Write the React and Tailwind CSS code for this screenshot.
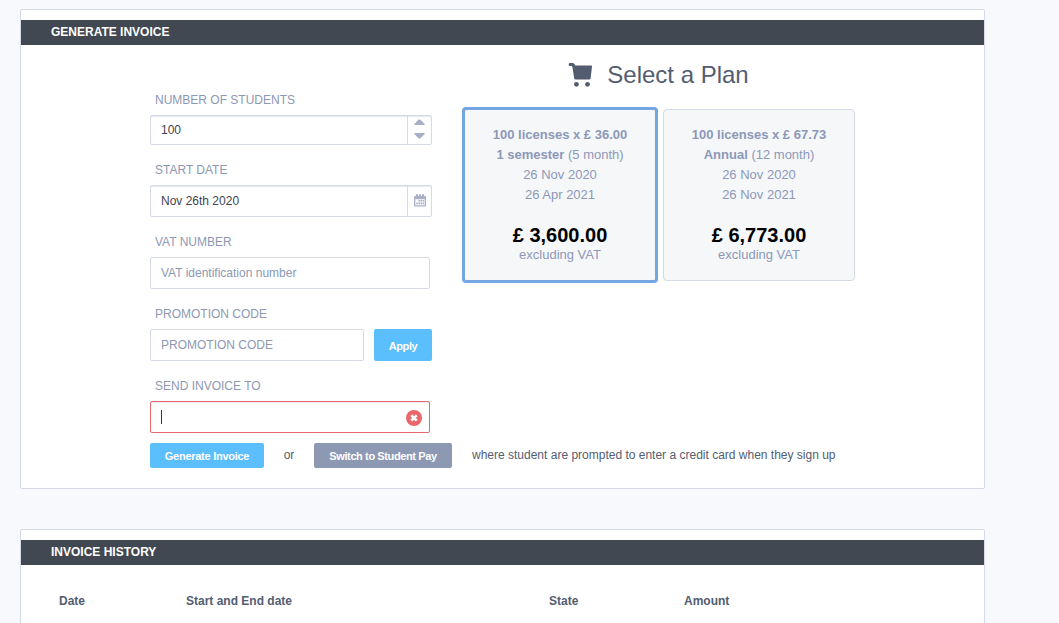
import React from "react";

function Panel({ title, className, children }) {
  return (
    <section className={`w-[965px] rounded-[2px] border border-[#d5d9e8] bg-white pt-[10px] ${className}`}>
      <h2 className="h-[25px] bg-[#424851] pl-[30px] text-[12px] leading-[24px] font-bold text-white">{title}</h2>
      {children}
    </section>
  );
}

function Field({ label, className = "", children }) {
  return (
    <div className={className}>
      <label className="block h-[30px] pl-[5px] text-[12px] leading-[30px] text-[#8d98b3]">{label}</label>
      {children}
    </div>
  );
}

const box = "rounded-[2px] border bg-white text-[12px]";

function Plan({ selected, price, name, months, from, to, total }) {
  return (
    <article
      className={
        selected
          ? "h-[176px] w-[196px] rounded-[4px] border-[3px] border-[#74a6e2] bg-[#f5f7f9] pt-[15px] text-center"
          : "mt-[2px] h-[172px] w-[192px] rounded-[4px] border border-[#d5d9e8] bg-[#f5f7f9] pt-[15px] text-center"
      }
    >
      <p className="font-bold">{price}</p>
      <p><b>{name}</b> ({months} month)</p>
      <p>{from}</p>
      <p>{to}</p>
      <p className="mt-5 text-[20px] font-bold text-black">{total}</p>
      <p>excluding VAT</p>
    </article>
  );
}

export default function App() {
  return (
    <main className="h-[623px] overflow-hidden bg-[#f8f9fd] pt-[9px] pl-5 font-['Liberation_Sans',Arial,sans-serif] text-[#535d70]">
      <Panel title="GENERATE INVOICE" className="h-[480px]">
        <div className="flex h-[398px] pl-[129px]">
          <div className="w-[282px] pt-[40px]">
            <Field label="NUMBER OF STUDENTS" className="h-[70px]">
              <div className={`${box} flex h-[30px] border-[#d5d9e8] shadow-[inset_0_1px_1px_#e8e9ef]`}>
                <span className="w-[257px] border-r border-[#d5d9e8] pl-[10px] leading-[28px] text-[#3f444e]">100</span>
                <svg className="mt-[3px] ml-[6px] h-[21px] w-[11px]" viewBox="0 0 10 21" preserveAspectRatio="none" fill="#a7b0c6">
                  <path d="M.3 6V5L4 .8Q5 0 6 .8L9.7 5V6ZM.3 14h9.4v1L6 19.2Q5 20 4 19.2L.3 15Z" />
                </svg>
              </div>
            </Field>
            <Field label="START DATE" className="h-[72px]">
              <div className={`${box} flex h-[32px] border-[#d5d9e8] shadow-[inset_0_1px_1px_#e8e9ef]`}>
                <span className="w-[257px] border-r border-[#d5d9e8] pl-[10px] leading-[30px] text-[#3f444e]">Nov 26th 2020</span>
                <svg className="mt-[8px] ml-[6px] h-[13px] w-[12px]" viewBox="0 0 12 13" fill="#a7b0c6">
                  <path fillRule="evenodd" d="M0 3Q0 2 1 2H2V.3h2V2h1V.3h2V2h1V.3h2V2h1q1 0 1 1v8.5q0 1-1 1H1q-1 0-1-1ZM1.3 5.2v6h9.4v-6Z" />
                  <path d="M4.5 6H6v1.6H4.5zM6.5 6H8v1.6H6.5zM8.5 6H10v1.6H8.5zM2.3 8.6h1.6v1.6H2.3zM4.5 8.6H6v1.6H4.5zM6.5 8.6H8v1.6H6.5zM8.5 8.6H10v1.6H8.5z" />
                </svg>
              </div>
            </Field>
            <Field label="VAT NUMBER" className="h-[72px]">
              <div className={`${box} h-[32px] w-[280px] border-[#d5d9e8] pl-[10px] leading-[30px] text-[#8d98b3]`}>VAT identification number</div>
            </Field>
            <Field label="PROMOTION CODE" className="h-[72px]">
              <div className="flex gap-[10px]">
                <div className={`${box} h-[32px] w-[214px] border-[#d5d9e8] pl-[10px] leading-[30px] text-[#8d98b3]`}>PROMOTION CODE</div>
                <button className="h-[32px] w-[58px] rounded-[2px] bg-[#5bbefd] pt-[2px] text-[11px] font-bold tracking-[-0.4px] text-white">Apply</button>
              </div>
            </Field>
            <Field label="SEND INVOICE TO">
              <div className={`${box} flex h-[32px] w-[280px] items-center justify-between border-[#e9686b] pr-[7px] pl-[10px] shadow-[inset_0_1px_1px_#e8e9ef]`}>
                <span className="h-[14px] w-px bg-[#30343c]" />
                <svg className="mt-[2px] h-4 w-4" viewBox="0 0 16 16">
                  <circle cx="8" cy="8" r="8" fill="#e9686b" />
                  <path d="m5.3 5.3 5.4 5.4m0-5.4-5.4 5.4" stroke="white" strokeWidth="2.6" />
                </svg>
              </div>
            </Field>
          </div>
          <div className="ml-[30px] w-[393px] pt-[10px]">
            <h1 className="flex h-[40px] items-center justify-center gap-[15px] text-[24px] leading-[40px]">
              <svg className="h-[25px] w-[24px]" viewBox="0 0 24 25" fill="#535d70">
                <path d="M1.6 0h3.2Q6.6 0 7.3 2.6h15.9q.8 0 .8.8l-1.4 12.2q-.1 1-1.1 1H7.4q-1 0-1.2-1L4.4 4Q4.2 3 3.4 3H1.6Q.7 3 .7 1.5T1.6 0Z" />
                <circle cx="8.4" cy="21.3" r="2.4" /><circle cx="19.5" cy="21.3" r="2.4" />
              </svg>
              <span>Select a Plan</span>
            </h1>
            <div className="mt-[12px] flex gap-[5px] text-[13px] leading-5 text-[#8d98b8]">
              <Plan selected price="100 licenses x £ 36.00" name="1 semester" months="5" from="26 Nov 2020" to="26 Apr 2021" total="£ 3,600.00" />
              <Plan price="100 licenses x £ 67.73" name="Annual" months="12" from="26 Nov 2020" to="26 Nov 2021" total="£ 6,773.00" />
            </div>
          </div>
        </div>
        <div className="flex h-[25px] pl-[129px] text-[12px] leading-[24px]">
          <button className="w-[114px] rounded-[2px] bg-[#5bbefd] pt-px text-[11px] font-bold tracking-[-0.27px] text-white">Generate Invoice</button>
          <span className="w-[50px] text-center">or</span>
          <button className="w-[138px] rounded-[2px] bg-[#8d98b3] pt-px text-[11px] font-bold tracking-[-0.39px] text-white">Switch to Student Pay</button>
          <span className="ml-5">where student are prompted to enter a credit card when they sign up</span>
        </div>
      </Panel>
      <Panel title="INVOICE HISTORY" className="mt-[40px] h-[140px]">
        <div className="grid grid-cols-[127px_363px_135px_200px] pt-[24px] pl-[38px] text-[12px] leading-6 font-bold">
          <span>Date</span>
          <span>Start and End date</span>
          <span>State</span>
          <span>Amount</span>
        </div>
      </Panel>
    </main>
  );
}
